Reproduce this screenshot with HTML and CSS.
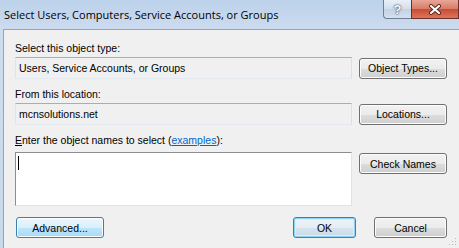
FILE: index.html
```html
<!DOCTYPE html>
<html lang="en">
<head>
    <meta charset="UTF-8">
    <title>Select Users, Computers, Service Accounts, or Groups</title>
    <link rel="stylesheet" href="styles.css">
</head>
<body>
    <div class="window">
        <div class="titlebar">
            <span class="title">Select Users, Computers, Service Accounts, or Groups</span>
            <div class="controls">
                <span class="ctl help">?</span>
                <span class="ctl close">
                    <svg width="14" height="11" viewBox="0 0 14 11">
                        <path d="M3 2 L11 9 M11 2 L3 9" stroke="#5a2418" stroke-width="4" stroke-linecap="round"/>
                        <path d="M3 2 L11 9 M11 2 L3 9" stroke="#fff" stroke-width="2.2" stroke-linecap="round"/>
                    </svg>
                </span>
            </div>
        </div>
        <div class="content">
            <div class="label">Select this object type:</div>
            <div class="row">
                <div class="field">Users, Service Accounts, or Groups</div>
                <button type="button" class="btn">Object Types...</button>
            </div>

            <div class="label">From this location:</div>
            <div class="row">
                <div class="field">mcnsolutions.net</div>
                <button type="button" class="btn">Locations...</button>
            </div>

            <div class="label label-names"><u>E</u>nter the object names to select (<a href="#">examples</a>):</div>
            <div class="row row-names">
                <div class="names"><span class="caret"></span></div>
                <button type="button" class="btn btn-check">Check Names</button>
            </div>

            <div class="footer">
                <button type="button" class="btn btn-adv">Advanced...</button>
                <button type="button" class="btn btn-ok">OK</button>
                <button type="button" class="btn btn-cancel">Cancel</button>
            </div>

            <svg class="grip" width="8" height="8" viewBox="0 0 8 8">
                <rect x="6" y="0" width="1" height="1" fill="#b8b8b8"/>
                <rect x="3" y="3" width="1" height="1" fill="#b8b8b8"/>
                <rect x="6" y="3" width="1" height="1" fill="#b8b8b8"/>
                <rect x="0" y="6" width="1" height="1" fill="#b8b8b8"/>
                <rect x="3" y="6" width="1" height="1" fill="#b8b8b8"/>
                <rect x="6" y="6" width="1" height="1" fill="#b8b8b8"/>
            </svg>
        </div>
    </div>
</body>
</html>
```

FILE: styles.css
```css
body {
	margin: 0;
	padding: 0;
	overflow: hidden;
	font-family: "Liberation Sans", Arial, sans-serif;
}
.window {
	width: 459px;
	height: 248px;
	display: flex;
	flex-direction: column;
	background: linear-gradient(to bottom, #bcd1ea, #cddcef 30px, #c9d9ec);
}
.titlebar {
	height: 29px;
	display: flex;
	justify-content: space-between;
	align-items: flex-start;
}
.title {
	font-family: "Open Sans", sans-serif;
	font-size: 11px;
	color: #000;
	padding-left: 4px;
	line-height: 29px;
}
.controls {
	display: flex;
}
.ctl {
	height: 18px;
	display: flex;
	align-items: center;
	justify-content: center;
	border: 1px solid #6f7f94;
	border-top: none;
}
.help {
	width: 27px;
	border-right: none;
	border-bottom-left-radius: 4px;
	background: linear-gradient(to bottom, #e9f0f9, #d3deec 50%, #c2d1e5 51%, #d4e0ee);
	color: #fff;
	font-weight: bold;
	font-size: 13px;
	text-shadow: 0 0 2px #34435a, 0 0 1px #34435a;
}
.close {
	width: 46px;
	border-color: #6b2f26;
	background: linear-gradient(to bottom, #e8a798, #d77b66 50%, #c84a32 51%, #d9765e);
}
.content {
	flex: 1;
	position: relative;
	margin-left: 3px;
	border-top: 1px solid #8ea4bf;
	border-left: 1px solid #8ea4bf;
	background: #f0f0f0;
	padding: 12px 12px 0 11px;
	font-size: 10.5px;
	color: #000;
}
.label {
	line-height: 13px;
	margin-bottom: 2px;
}
.label a {
	color: #0066cc;
}
.label-names {
	margin-bottom: 5px;
}
.row {
	display: grid;
	grid-template-columns: 337px 88px;
	column-gap: 7px;
	align-items: center;
	margin-bottom: 9px;
}
.row-names {
	align-items: start;
	margin-bottom: 11px;
}
.field {
	height: 20px;
	line-height: 20px;
	padding-left: 3px;
	border: 1px solid;
	border-color: #abadb3 #dbdfe6 #e3e9ef #e2e3ea;
	background: #f0f0f0;
	white-space: nowrap;
}
.names {
	height: 52px;
	position: relative;
	background: #fff;
	border: 1px solid;
	border-color: #8b8d92 #e3e3e3 #e3e3e3 #8b8d92;
}
.caret {
	position: absolute;
	left: 2px;
	top: 3px;
	width: 1px;
	height: 14px;
	background: #000;
}
.btn {
	height: 21px;
	padding: 0;
	font-family: "Liberation Sans", Arial, sans-serif;
	font-size: 10.5px;
	color: #000;
	border: 1px solid #707070;
	border-radius: 3px;
	background: linear-gradient(to bottom, #f2f2f2, #ebebeb 50%, #dddddd 51%, #cfcfcf);
	box-shadow: inset 0 0 0 1px #fcfcfc;
}
.btn-check {
	margin-top: 1px;
}
.footer {
	display: flex;
	align-items: center;
}
.btn-adv {
	width: 88px;
	margin-left: 1px;
	border-color: #3c7fb1;
	background: linear-gradient(to bottom, #eaf6fd, #d9f0fc 50%, #bee6fd 51%, #a7d9f5);
}
.btn-ok {
	width: 63px;
	margin-left: auto;
	border-color: #3c7fb1;
	box-shadow: inset 0 0 0 1px #8fd3f3, inset 0 0 0 2px #d6eef9;
	background: linear-gradient(to bottom, #eef5fa, #e3edf4 50%, #d6e4ee 51%, #cad9e6);
}
.btn-cancel {
	width: 73px;
	margin-left: 18px;
}
.grip {
	position: absolute;
	right: 2px;
	bottom: 2px;
}
```
